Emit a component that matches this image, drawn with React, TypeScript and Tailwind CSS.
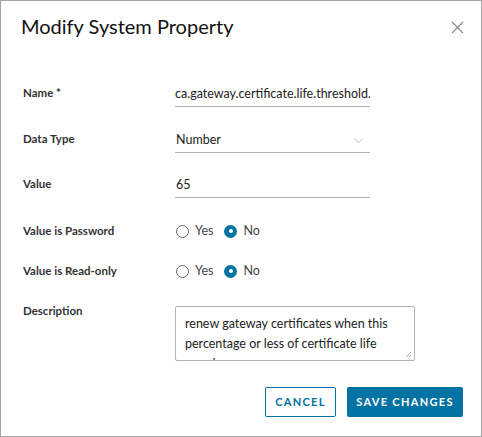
import React, { useState } from 'react';

const Radio = ({ checked, label }: { checked: boolean; label: string }) => (
  <label className="flex items-center gap-[6px] cursor-pointer">
    {checked ? (
      <span className="flex h-[13px] w-[13px] items-center justify-center rounded-full bg-[#0072a3]">
        <span className="h-[4px] w-[4px] rounded-full bg-white" />
      </span>
    ) : (
      <span className="h-[13px] w-[13px] rounded-full border border-[#666]" />
    )}
    <span className="text-[12.5px] text-[#454545]">{label}</span>
  </label>
);

const Row = ({ label, children, h }: { label: string; children: React.ReactNode; h: string }) => (
  <div className={`flex items-center ${h}`}>
    <div className="w-[152px] text-[11.5px] font-bold text-[#333]">{label}</div>
    {children}
  </div>
);

const App: React.FC = () => {
  const [pwd] = useState(false);
  const [ro] = useState(false);

  return (
    <div
      className="h-[437px] w-[482px] border border-[#a6a6a6] bg-white"
      style={{ fontFamily: 'Lato, "Open Sans", sans-serif' }}
    >
      <div className="flex items-center justify-between pl-[20px] pr-[17px] pt-[10px]">
        <h1 className="text-[20px] font-normal text-[#111]">Modify System Property</h1>
        <svg width="13" height="13" viewBox="0 0 13 13" className="mt-[2px] text-[#8c8c8c]">
          <path d="M1 1L12 12M12 1L1 12" stroke="currentColor" strokeWidth="1.2" />
        </svg>
      </div>

      <div className="pl-[22px] pt-[37px]">
        <Row label="Name *" h="h-[30px]">
          <div className="w-[195px] border-b border-[#b3b3b3] pb-[2px] pt-[6px] text-[12.5px] text-[#222] overflow-hidden whitespace-nowrap">
            ca.gateway.certificate.life.threshold.
          </div>
        </Row>
        <div className="h-[16px]" />
        <Row label="Data Type" h="h-[30px]">
          <div className="flex w-[195px] items-center justify-between border-b border-[#b3b3b3] pb-[2px] pt-[6px] text-[12.5px] text-[#222]">
            <span className="pl-[1px]">Number</span>
            <svg width="9" height="6" viewBox="0 0 9 6" className="mr-[7px] text-[#aaa]">
              <path d="M0.5 0.8L4.5 4.8L8.5 0.8" stroke="currentColor" fill="none" strokeWidth="0.9" />
            </svg>
          </div>
        </Row>
        <div className="h-[15px]" />
        <Row label="Value" h="h-[30px]">
          <div className="w-[195px] border-b border-[#b3b3b3] pb-[2px] pt-[6px] pl-[1px] text-[12.5px] text-[#222]">65</div>
        </Row>
        <div className="h-[17px]" />
        <Row label="Value is Password" h="h-[30px]">
          <div className="flex items-center gap-[11px] pl-[1px]">
            <Radio checked={pwd} label="Yes" />
            <Radio checked={!pwd} label="No" />
          </div>
        </Row>
        <div className="h-[10px]" />
        <Row label="Value is Read-only" h="h-[30px]">
          <div className="flex items-center gap-[11px] pl-[1px]">
            <Radio checked={ro} label="Yes" />
            <Radio checked={!ro} label="No" />
          </div>
        </Row>
        <div className="flex items-start pt-[16px]">
          <div className="w-[152px] text-[11.5px] font-bold text-[#333]">Description</div>
          <div className="relative mt-[4px] h-[55px] w-[240px] overflow-hidden rounded-[2px] border border-[#b3b3b3] px-[9px] pt-[7px] text-[12.5px] leading-[20px] text-[#222]">
            renew gateway certificates when this percentage or less of certificate life remains
            <svg width="7" height="7" viewBox="0 0 7 7" className="absolute bottom-[2px] right-[2px] text-[#999]">
              <path d="M1 6L6 1M4 6L6 4" stroke="currentColor" strokeWidth="0.8" />
            </svg>
          </div>
        </div>
      </div>

      <div className="flex justify-end gap-[11px] pr-[18px] pt-[26px]">
        <button className="h-[30px] w-[71px] rounded-[2px] border border-[#0072a3] bg-white text-[11px] font-bold tracking-[0.12em] text-[#0072a3]">
          CANCEL
        </button>
        <button className="h-[30px] w-[116px] rounded-[2px] bg-[#0072a3] text-[11px] font-bold tracking-[0.12em] text-white">
          SAVE CHANGES
        </button>
      </div>
    </div>
  );
};

export default App;
